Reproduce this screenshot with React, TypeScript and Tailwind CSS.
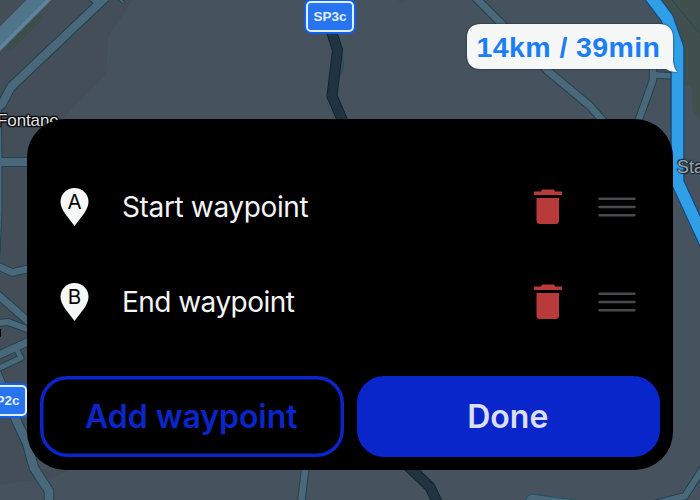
import React from "react";

const roads = [
  { d: "M-6 111 L2 104 L11 87 L106 -3", w: 8 },
  { d: "M97 3 L86 -8", w: 5 },
  { d: "M117 -3 L123 2", w: 2 },
  { d: "M-3 100 L-2 160 L-2 210 L-4 255", w: 7 },
  { d: "M-3 162 L32 162", w: 8 },
  { d: "M-2 266 L12 272.500 L30 268.500", w: 6.5 },
  { d: "M-3 294 L13 308 L30 323", w: 7 },
  { d: "M-3 323 L8 322 L30 330", w: 6 },
  { d: "M-3 356 L12 349 L30 341", w: 7 },
  { d: "M-3 369 L21 358 L17 350", w: 5 },
  { d: "M-4 372 L18 424 L27 443 L34 468 L49 491 L49 504", w: 8.5 },
  { d: "M305.500 466 L301 504", w: 6.500 },
  { d: "M473 -5 L500 22 L548 71 L590 106 L604 122", w: 7 },
  { d: "M653 64 L653 80 L638 122", w: 6.500 },
  { d: "M655 75 L676 76", w: 5.500 },
  { d: "M654 504 L685 496 L707 462", w: 6 },
];

function MapCanvas() {
  return (
    <svg className="absolute inset-0 h-full w-full" viewBox="0 0 700 500" aria-hidden="true">
      <rect width="700" height="500" fill="#46535f" />
      <path d="M0 0H133L108 37L106 75L64 117L27 170V469L70 470L56 477L0 485Z" fill="#434e59" />
      <path d="M4 46L38 13L44 18L10 52Z" fill="#3d4e4e" />
      <path d="M398 0L402 4L406 0Z" fill="#3d5350" />
      <path d="M661 0H700V121L693 110L691 85H683V44L672 17Z" fill="#3f504f" />
      <path d="M672 0L700 34" stroke="#28494d" fill="none" />
      <path d="M-6 45L45 -6" stroke="#60849d" strokeWidth="17" />
      <path d="M-6 43L43 -6" stroke="#50748a" strokeWidth="13" />
      <g fill="none" stroke="#1c444f" strokeLinejoin="round">
        {roads.map((r) => <path key={r.d} d={r.d} strokeWidth={r.w + 2} />)}
      </g>
      <g fill="none" stroke="#4b687b" strokeLinejoin="round">
        {roads.map((r) => <path key={r.d} d={r.d} strokeWidth={r.w} />)}
      </g>
      <path d="M525 502L527 497L531 494L576 500V502Z" fill="#4b687b" stroke="#1c5560" />
      <path d="M342 53L343.500 66L339 78" fill="none" stroke="#24525d" strokeWidth="1.500" />
      <g fill="none" strokeLinejoin="round">
        <path d="M331 30L337.500 50L332 96L344 124M408 466L430 487L438 504" stroke="#14242e" strokeWidth="11" />
        <path d="M331 30L337.500 50L332 96L344 124M408 466L430 487L438 504" stroke="#203341" strokeWidth="9" />
        <path d="M648 -7L667 18L677.500 48V182L706 244" stroke="#174981" strokeWidth="14" />
        <path d="M648 -7L667 18L677.500 48V182L706 244" stroke="#309fe8" strokeWidth="11.500" />
      </g>
      <path d="M0 329V337" stroke="#000" strokeWidth="2" />
    </svg>
  );
}

function RoadShield({ children }: { children: string }) {
  return (
    <div className="rounded-[6px] bg-[#0d62ef] p-px shadow-[0_0_1px_1px_#0d62ef]">
      <div className="flex h-[31px] w-[48px] items-center justify-center rounded-[5px] border-2 border-[#e5eefc] bg-[#2674ef] pt-px font-['Liberation_Sans',sans-serif] text-[13.500px] leading-none font-bold text-[#e5eefc]">
        {children}
      </div>
    </div>
  );
}

function Pin({ letter }: { letter: string }) {
  return (
    <svg className="h-[40px] w-[30px] shrink-0" viewBox="0 0 30 40" aria-hidden="true">
      <path d="M15.500 1C7.800 1 1.500 7.100 1.500 14.700C1.500 19.200 3.700 23 6.500 27.200L15.500 39L24.500 27.200C27.300 23 29.500 19.200 29.500 14.700C29.500 7.100 23.200 1 15.500 1Z" fill="#f6f7f7" />
      <text x="15.500" y="22" textAnchor="middle" fontFamily="Inter, sans-serif" fontSize="20.500" fill="#050505">{letter}</text>
    </svg>
  );
}

function TrashIcon() {
  return (
    <svg className="h-[36px] w-[30px] shrink-0" viewBox="0 0 30 36" aria-hidden="true">
      <path d="M1 2.500H8L9 0.500H21L22 2.500H29V6H1Z" fill="#b83a3b" />
      <path d="M3.500 9H26V31.500Q26 35 22.500 35H7Q3.500 35 3.500 31.500Z" fill="#b83a3b" />
    </svg>
  );
}

function DragHandle() {
  return (
    <svg className="h-[20px] w-[38px] shrink-0" viewBox="0 0 38 20" aria-hidden="true">
      <path d="M1.500 1.800H36.500M1.500 10H36.500M1.500 18.200H36.500" stroke="#4a494d" strokeWidth="2.500" strokeLinecap="round" />
    </svg>
  );
}

function WaypointRow({ letter, label, tracking }: { letter: string; label: string; tracking: string }) {
  return (
    <div className="flex h-[95px] items-center pr-[37px] pl-[32px]">
      <Pin letter={letter} />
      <span className={`ml-[33px] grow text-[28px] leading-none font-normal whitespace-nowrap text-[#f4f4f4] ${tracking}`}>{label}</span>
      <button aria-label="Delete waypoint" className="mr-[35px]"><TrashIcon /></button>
      <DragHandle />
    </div>
  );
}

export default function App() {
  return (
    <main className="relative h-[500px] w-[700px] overflow-hidden bg-[#46535f] pt-[119px] pl-[27px] font-['Inter',sans-serif]">
      <MapCanvas />
      <span className="absolute top-[111px] left-[-3px] font-['Liberation_Sans',sans-serif] text-[17px] leading-[20px] tracking-[-0.1px] text-[#e5e5e5] [text-shadow:0_0_2px_#000,1px_1px_1px_#000,-1px_-1px_1px_#000,1px_-1px_1px_#000,-1px_1px_1px_#000]">Fontane</span>
      <span className="absolute top-[157px] left-[677px] font-['Liberation_Sans',sans-serif] text-[18px] leading-[20px] whitespace-nowrap text-[#96a8b5] [text-shadow:0_0_2px_#111,1px_1px_1px_#222,-1px_-1px_1px_#222]">Sta</span>
      <div className="absolute top-0 left-[305px]"><RoadShield>SP3c</RoadShield></div>
      <div className="absolute top-[384px] left-[-22px]"><RoadShield>SP2c</RoadShield></div>
      <div className="absolute top-[23px] left-[466px]">
        <svg className="absolute inset-0 h-[50px] w-[212px] drop-shadow-[0_0_1px_#1c2835]" viewBox="0 0 212 50" aria-hidden="true">
          <path d="M15 1H193Q207 1 207 15V39Q208 45 211 49Q204 49 200 46H15Q1 46 1 32V15Q1 1 15 1Z" fill="#f6f7f7" />
        </svg>
        <span className="relative flex h-[49px] w-[205px] items-center justify-center font-['Liberation_Sans',sans-serif] text-[28.500px] leading-none font-bold tracking-[0.4px] whitespace-nowrap text-[#1b7ef5]">14km / 39min</span>
      </div>
      <section className="relative h-[351px] w-[646px] rounded-[38px] bg-black pt-[40px]">
        <WaypointRow letter="A" label="Start waypoint" tracking="tracking-[-0.36px]" />
        <WaypointRow letter="B" label="End waypoint" tracking="tracking-[-0.54px]" />
        <div className="mt-[27px] grid grid-cols-2 gap-[13px] pr-[13px] pl-[13px]">
          <button className="h-[81px] rounded-[27px] pr-px text-[32px] leading-none font-semibold tracking-[-0.05px] text-[#0826ca] shadow-[inset_0_0_0_3.5px_#0826ca]">Add waypoint</button>
          <button className="h-[81px] rounded-[27px] bg-[#0826ca] pr-px text-[32px] leading-none font-semibold text-[#dcdff3]">Done</button>
        </div>
      </section>
    </main>
  );
}
